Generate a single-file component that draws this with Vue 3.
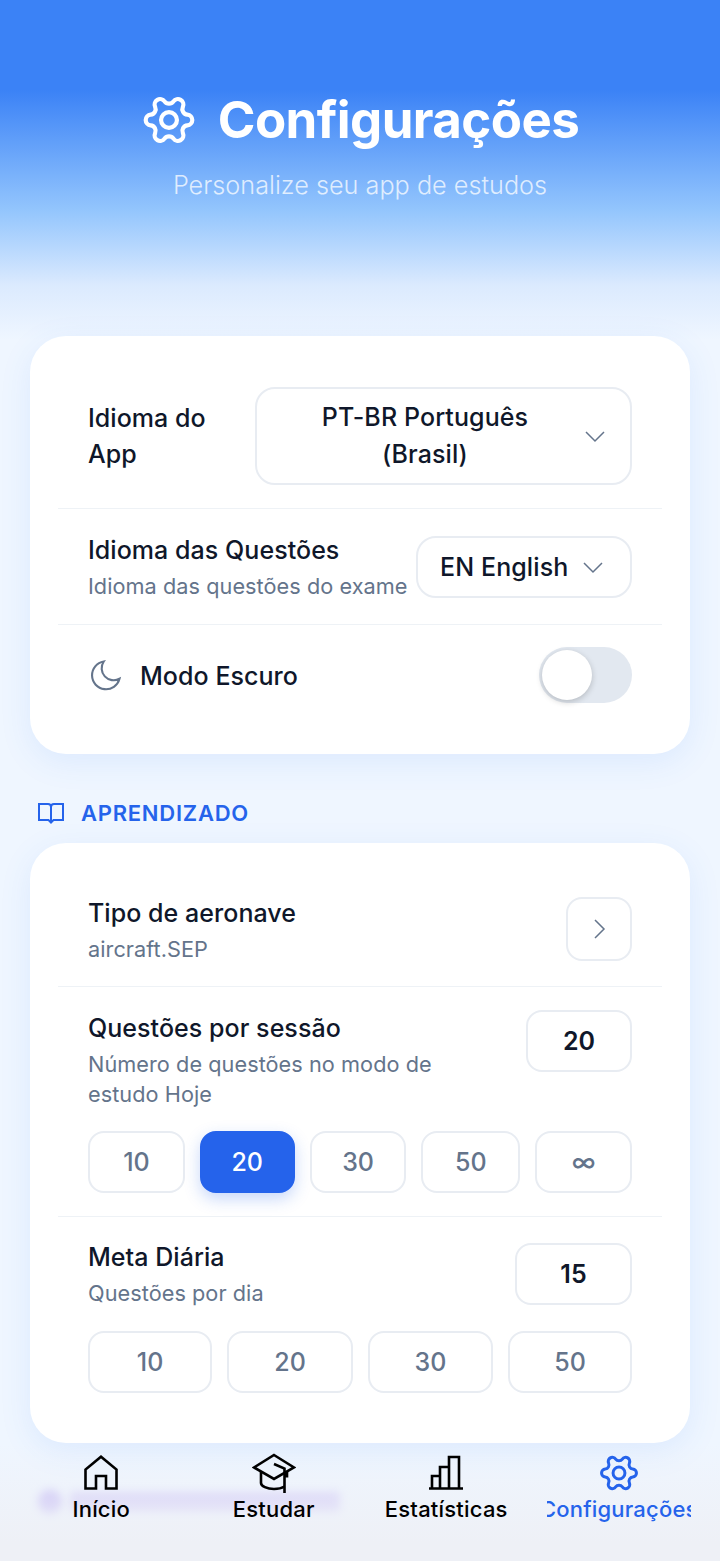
<template>
  <div class="page">
    <header class="hero">
      <h1 class="hero-title">
        <svg class="hero-gear" viewBox="0 0 24 24" fill="none" stroke="currentColor" stroke-width="1.8">
          <g transform="rotate(90 12 12)">
            <path :d="gearPath" />
            <circle cx="12" cy="12" r="3.4" />
          </g>
        </svg>
        Configurações
      </h1>
      <p class="hero-sub">Personalize seu app de estudos</p>
    </header>

    <main class="content">
      <section class="card">
        <div class="row row-lang">
          <span class="label label-narrow">Idioma do App</span>
          <button class="select select-wide">
            <span class="select-text">PT-BR Português (Brasil)</span>
            <svg class="chev" viewBox="0 0 24 24" fill="none" stroke="currentColor" stroke-width="1.5"><path d="M3 8l9 9 9-9" /></svg>
          </button>
        </div>
        <div class="row row-lang2">
          <div class="info">
            <div class="label">Idioma das Questões</div>
            <div class="hint">Idioma das questões do exame</div>
          </div>
          <button class="select select-small">
            <span>EN English</span>
            <svg class="chev" viewBox="0 0 24 24" fill="none" stroke="currentColor" stroke-width="1.5"><path d="M3 8l9 9 9-9" /></svg>
          </button>
        </div>
        <div class="row row-dark">
          <div class="dark-left">
            <svg class="moon" viewBox="0 0 24 24" fill="none" stroke="currentColor" stroke-width="1.4"><path d="M10.500 3a8 8 0 0 0 10.500 11.500A9.300 9.300 0 1 1 10.500 3Z" /></svg>
            <span class="label dark-label">Modo Escuro</span>
          </div>
          <div class="toggle"><span class="knob"></span></div>
        </div>
      </section>

      <h2 class="section-title">
        <svg class="book" viewBox="0 0 26 21" fill="none" stroke="currentColor" stroke-width="2"><path d="M13 4v15M1 1h9a3 3 0 0 1 3 3 3 3 0 0 1 3-3h9v16H15.500L13 19.500 10.500 17H1Z" /></svg>
        APRENDIZADO
      </h2>

      <section class="card">
        <div class="row row-type">
          <div class="info info-type">
            <div class="label">Tipo de aeronave</div>
            <div class="hint">aircraft.SEP</div>
          </div>
          <button class="arrow-btn">
            <svg class="chev-r" viewBox="0 0 24 24" fill="none" stroke="currentColor" stroke-width="1.5"><path d="M8 3l9 9-9 9" /></svg>
          </button>
        </div>

        <div class="row row-session">
          <div class="stack-top">
            <div class="info info-limit">
              <div class="label">Questões por sessão</div>
              <div class="hint">Número de questões no modo de estudo Hoje</div>
            </div>
            <div class="value value-session">20</div>
          </div>
          <div class="chips chips-session">
            <button
              v-for="c in sessionChips"
              :key="c.text"
              class="chip"
              :class="{ active: c.text === '20' }"
              :style="{ flexGrow: c.w }"
            >{{ c.text }}</button>
          </div>
        </div>

        <div class="row row-goal">
          <div class="stack-top">
            <div class="info">
              <div class="label">Meta Diária</div>
              <div class="hint">Questões por dia</div>
            </div>
            <div class="value value-goal">15</div>
          </div>
          <div class="chips chips-goal">
            <button v-for="c in goalChips" :key="c.text" class="chip" :style="{ flexGrow: c.w }">{{ c.text }}</button>
          </div>
        </div>
      </section>
    </main>

    <!-- content scrolled under the tab bar, only visible as a blur -->
    <div class="behind-nav">
      <span class="behind-dot"></span>
      <span class="behind-bar"></span>
    </div>

    <nav class="tabbar">
      <a v-for="t in tabs" :key="t.name" class="tab" :class="{ current: t.current }">
        <span class="tab-slot">
          <svg class="tab-icon" viewBox="0 0 36 36" fill="none" stroke="currentColor" stroke-width="2.6" v-if="t.name === 'Início'">
            <path d="M2.500 33.500V14.500L18 1.800 33.500 14.500v19H23V21H13v12.500Z" />
          </svg>
          <svg class="tab-cap" viewBox="0 0 44 40" fill="none" stroke="currentColor" stroke-width="2.6" v-else-if="t.name === 'Estudar'">
            <path d="M22 2 42 14.500 22 26 2 14.500Z" />
            <path d="M9 19v11c0 3 6 6 13 6 4 0 8-1 10.500-2.500" />
            <path d="M35 18v6.500M22 11l10.500 4.500V40" />
          </svg>
          <svg class="tab-icon" viewBox="0 0 36 36" fill="none" stroke="currentColor" stroke-width="2.6" v-else-if="t.name === 'Estatísticas'">
            <path d="M1 33.500h34M4 33.500V21h8v12.500M12 33.500V12h9v21.500M21 33.500V2h10v31.500" />
          </svg>
          <svg class="tab-gear" viewBox="0 0 24 24" fill="none" stroke="currentColor" stroke-width="1.7" v-else>
            <g transform="rotate(90 12 12)">
              <path :d="gearPath" />
              <circle cx="12" cy="12" r="3.4" />
            </g>
          </svg>
        </span>
        <span class="tab-label">{{ t.name }}</span>
      </a>
    </nav>
  </div>
</template>

<script setup>
const gearPath = 'M9.671 4.136a2.34 2.34 0 0 1 4.659 0 2.34 2.34 0 0 0 3.319 1.915 2.34 2.34 0 0 1 2.33 4.033 2.34 2.34 0 0 0 0 3.831 2.34 2.34 0 0 1-2.33 4.033 2.34 2.34 0 0 0-3.319 1.915 2.34 2.34 0 0 1-4.659 0 2.34 2.34 0 0 0-3.32-1.915 2.34 2.34 0 0 1-2.33-4.033 2.34 2.34 0 0 0 0-3.831A2.34 2.34 0 0 1 6.35 6.051a2.34 2.34 0 0 0 3.319-1.915'

const sessionChips = [
  { text: '10', w: 97 },
  { text: '20', w: 95 },
  { text: '30', w: 97 },
  { text: '50', w: 99 },
  { text: '∞', w: 97 }
]
const goalChips = [
  { text: '10', w: 124 },
  { text: '20', w: 126 },
  { text: '30', w: 125 },
  { text: '50', w: 124 }
]

const tabs = [
  { name: 'Início' },
  { name: 'Estudar' },
  { name: 'Estatísticas' },
  { name: 'Configurações', current: true }
]
</script>

<style>
html, body {
  margin: 0;
  background: #eff6ff;
}
</style>

<style scoped>
.page {
  position: relative;
  width: 720px;
  height: 1561px;
  overflow: hidden;
  font-family: Inter, "Noto Sans", sans-serif;
  color: #0f172a;
  background: linear-gradient(180deg, #3b82f6 0, #3b82f6 90px, #93c5fd 210px, #dbeafe 285px, #eff6ff 340px, #eff6ff 100%);
}

.hero {
  height: 336px;
  box-sizing: border-box;
  padding-top: 90px;
  text-align: center;
  color: #fff;
}

.hero-title {
  margin: 0;
  display: flex;
  align-items: center;
  justify-content: center;
  gap: 21px;
  font-size: 51px;
  line-height: 60px;
  font-weight: 700;
  letter-spacing: -0.6px;
}

.hero-gear {
  width: 56px;
  height: 56px;
  flex: none;
}

.hero-sub {
  margin: 19px 0 0;
  font-size: 25.25px;
  line-height: 32px;
  font-weight: 300;
  color: rgba(255, 255, 255, 0.75);
}

.content {
  padding: 0 30px;
}

.card {
  box-sizing: border-box;
  padding: 28px;
  background: #fff;
  border-radius: 36px;
  box-shadow: 0 8px 32px rgba(59, 130, 246, 0.1);
}

.row {
  padding: 0 30px;
  border-bottom: 1px solid #eef2f6;
}

.row-lang {
  display: flex;
  align-items: center;
  justify-content: space-between;
  padding-top: 23px;
  padding-bottom: 23px;
}

.row-lang2 {
  display: flex;
  align-items: flex-start;
  justify-content: space-between;
  padding-top: 27px;
  padding-bottom: 23px;
}

.row-dark {
  display: flex;
  align-items: center;
  justify-content: space-between;
  padding-top: 22px;
  padding-bottom: 23px;
  border-bottom: none;
}

.row-type {
  display: flex;
  align-items: flex-start;
  justify-content: space-between;
  padding-top: 26px;
  padding-bottom: 22px;
}

.row-session {
  padding-top: 23px;
  padding-bottom: 23px;
}

.row-goal {
  padding-top: 26px;
  padding-bottom: 22px;
  border-bottom: none;
}

.label {
  font-size: 25px;
  line-height: 28px;
  font-weight: 450;
  letter-spacing: 0.05px;
  color: #0f172a;
}

.label-narrow {
  width: 150px;
  line-height: 36px;
}

.dark-label {
  padding-top: 2px;
}

.hint {
  margin-top: 7px;
  font-size: 21.7px;
  line-height: 30px;
  letter-spacing: 0.05px;
  color: #64748b;
}

.select {
  display: flex;
  align-items: center;
  box-sizing: border-box;
  background: #fff;
  border: 2px solid #e8ecf2;
  font-family: inherit;
  font-size: 25px;
  font-weight: 450;
  letter-spacing: 0.1px;
  color: #0f172a;
  padding: 0;
}

.select-wide {
  width: 377px;
  height: 98px;
  border-radius: 20px;
  padding: 0 23px 0 34px;
  line-height: 37px;
}

.select-text {
  flex: 1;
  padding-right: 24px;
}

.select-small {
  width: 216px;
  height: 62px;
  border-radius: 20px;
  justify-content: space-between;
  padding: 0 25px 0 22px;
}

.chev {
  width: 24px;
  height: 24px;
  flex: none;
  color: #64748b;
}

.dark-left {
  display: flex;
  align-items: center;
  gap: 16px;
}

.moon {
  width: 36px;
  height: 36px;
  color: #64748b;
}

.toggle {
  position: relative;
  width: 93px;
  height: 56px;
  border-radius: 28px;
  background: #e2e8f0;
}

.knob {
  position: absolute;
  left: 3px;
  top: 3px;
  width: 50px;
  height: 50px;
  border-radius: 50%;
  background: #fff;
  box-shadow: 0 2px 6px rgba(0, 0, 0, 0.2);
}

.section-title {
  display: flex;
  align-items: center;
  gap: 17px;
  margin: 0;
  padding: 44px 0 15px 8px;
  font-size: 22px;
  line-height: 30px;
  font-weight: 600;
  letter-spacing: 0.75px;
  color: #2563eb;
}

.book {
  width: 26px;
  height: 21px;
}

.arrow-btn {
  box-sizing: border-box;
  width: 66px;
  height: 64px;
  display: flex;
  align-items: center;
  justify-content: center;
  background: #fff;
  border: 2px solid #e8ecf2;
  border-radius: 16px;
  padding: 0;
}

.chev-r {
  width: 24px;
  height: 24px;
  color: #64748b;
}

.info-type {
  padding-top: 2px;
}

.stack-top {
  display: flex;
  align-items: flex-start;
  justify-content: space-between;
}

.info-limit {
  width: 360px;
  padding-top: 4px;
}

.value {
  box-sizing: border-box;
  height: 62px;
  display: flex;
  align-items: center;
  justify-content: center;
  border: 2px solid #e8ecf2;
  border-radius: 16px;
  font-size: 25px;
  font-weight: 600;
  color: #0f172a;
}

.value-session {
  width: 106px;
}

.value-goal {
  width: 117px;
}

.chips {
  display: flex;
  gap: 15px;
}

.chips-session {
  margin-top: 22px;
}

.chips-goal {
  margin-top: 23px;
}

.chip {
  flex: 1 1 0;
  min-width: 0;
  box-sizing: border-box;
  height: 62px;
  background: #fff;
  border: 2px solid #e8ecf2;
  border-radius: 16px;
  padding: 0;
  font-family: inherit;
  font-size: 25px;
  font-weight: 450;
  color: #64748b;
}

.chip.active {
  background: #2563eb;
  border-color: #2563eb;
  color: #fff;
  box-shadow: 0 6px 16px rgba(37, 99, 235, 0.25);
}

.behind-nav {
  position: absolute;
  left: 38px;
  top: 1490px;
  display: flex;
  align-items: center;
  gap: 8px;
  filter: blur(4px);
}

.behind-dot {
  width: 24px;
  height: 24px;
  border-radius: 50%;
  background: #c4b9f8;
}

.behind-bar {
  width: 270px;
  height: 20px;
  border-radius: 4px;
  background: #d3ccfa;
}

.tabbar {
  position: absolute;
  left: 0;
  right: 0;
  bottom: 0;
  height: 118px;
  box-sizing: border-box;
  padding: 10px 29px 0;
  display: grid;
  grid-template-columns: repeat(4, 1fr);
  gap: 28px;
  background: linear-gradient(180deg, rgba(238, 240, 246, 0) 0, rgba(238, 240, 246, 0.5) 45%, #eef0f6 85%);
}

.tab {
  display: flex;
  flex-direction: column;
  align-items: center;
  overflow: hidden;
  height: 72px;
  color: #000;
}

.tab.current {
  color: #2563eb;
}

.tab-slot {
  height: 40px;
  display: flex;
  align-items: center;
  justify-content: center;
  flex: none;
}

.tab-icon {
  width: 36px;
  height: 36px;
}

.tab-cap {
  width: 44px;
  height: 40px;
}

.tab-gear {
  width: 42px;
  height: 42px;
}

.tab-label {
  margin-top: 2px;
  font-size: 22px;
  line-height: 28px;
  font-weight: 450;
  letter-spacing: 0.2px;
  white-space: nowrap;
}
</style>
